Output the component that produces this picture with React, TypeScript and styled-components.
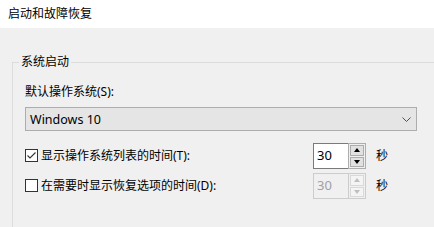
import React from 'react'
import styled, { createGlobalStyle } from 'styled-components'

const GlobalStyle = createGlobalStyle`
    html, body {
        margin: 0;
        padding: 0;
        background: #f0f0f0;
    }
    body {
        font-family: "Noto Sans", "Noto Sans CJK SC", sans-serif;
        font-size: 12px;
        color: #000;
    }
`

export default function App() {
    return (
        <Page>
            <GlobalStyle />

            <Header>启动和故障恢复</Header>

            <Body>
                <Group>
                    <Legend>系统启动</Legend>

                    <FieldLabel>默认操作系统(S):</FieldLabel>

                    <Combo>
                        <span>Windows 10</span>
                        <svg width="9" height="5" viewBox="0 0 9 5">
                            <polyline points="0.5,0.5 4.5,4.5 8.5,0.5" fill="none" stroke="#505050" strokeWidth="1" />
                        </svg>
                    </Combo>

                    <Rows>
                        <TimeRow
                            checked
                            label="显示操作系统列表的时间(T):"
                            value="30"
                        />
                        <TimeRow
                            label="在需要时显示恢复选项的时间(D):"
                            value="30"
                        />
                    </Rows>
                </Group>
            </Body>
        </Page>
    )
}

const TimeRow = (props: RowProps) => (
    <Row>
        <CheckLabel>
            <Box>
                {props.checked && (
                    <svg width="11" height="11" viewBox="0 0 11 11">
                        <polyline points="1.5,5.5 4,8 9.5,2.5" fill="none" stroke="#333" strokeWidth="1.1" />
                    </svg>
                )}
            </Box>
            <span>{props.label}</span>
        </CheckLabel>

        <Spin>
            <SpinField $disabled={!props.checked}>{props.value}</SpinField>
            <SpinButtons $disabled={!props.checked}>
                <SpinButton $disabled={!props.checked}>
                    <Arrow $up $disabled={!props.checked} />
                </SpinButton>
                <SpinButton $disabled={!props.checked}>
                    <Arrow $disabled={!props.checked} />
                </SpinButton>
            </SpinButtons>
        </Spin>

        <Unit>秒</Unit>
    </Row>
)

const Page = styled.div`
    width: 434px;
    height: 227px;
    overflow: hidden;
    display: flex;
    flex-direction: column;
`

const Header = styled.div`
    height: 28px;
    flex-shrink: 0;
    background: #fff;
    padding-left: 8px;
    line-height: 27px;
    font-size: 12px;
`

const Body = styled.div`
    flex: 1;
    background: #f0f0f0;
    padding: 26px 0 0 12px;
    overflow: hidden;
`

const Group = styled.fieldset`
    margin: 0;
    width: 460px;
    height: 200px;
    border: 1px solid #dcdcdc;
    padding: 0 0 0 12px;
    display: flex;
    flex-direction: column;
`

const Legend = styled.legend`
    margin-left: -6px;
    padding: 0 2px;
    line-height: 16px;
    height: 16px;
`

const FieldLabel = styled.div`
    margin-top: 14px;
    line-height: 16px;
`

const Combo = styled.div`
    margin-top: 7px;
    width: 392px;
    height: 24px;
    box-sizing: border-box;
    border: 1px solid #adadad;
    background: #e5e5e5;
    display: flex;
    align-items: center;
    justify-content: space-between;
    padding: 0 5px 0 4px;
    font-size: 12.5px;
`

const Rows = styled.div`
    margin-top: 12px;
    display: flex;
    flex-direction: column;
    gap: 4px;
`

const Row = styled.div`
    display: grid;
    grid-template-columns: 278px 53px auto;
    column-gap: 10px;
    align-items: center;
    height: 26px;
`

const CheckLabel = styled.label`
    display: flex;
    align-items: center;
    gap: 3px;
    margin-top: -2px;
`

const Box = styled.span`
    width: 13px;
    height: 13px;
    box-sizing: border-box;
    border: 1px solid #333;
    background: #fff;
    display: flex;
    align-items: center;
    justify-content: center;
`

const Spin = styled.div`
    display: flex;
    height: 26px;
`

const SpinField = styled.div<{ $disabled?: boolean }>`
    width: 35px;
    box-sizing: border-box;
    border: 1px solid ${p => p.$disabled ? '#cccccc' : '#7a7a7a'};
    border-right: none;
    background: ${p => p.$disabled ? '#f0f0f0' : '#fff'};
    color: ${p => p.$disabled ? '#a0a0a0' : '#000'};
    padding-left: 3px;
    line-height: 23px;
    font-size: 13px;
`

const SpinButtons = styled.div<{ $disabled?: boolean }>`
    width: 18px;
    box-sizing: border-box;
    border: 1px solid ${p => p.$disabled ? '#cccccc' : '#adadad'};
    padding: 1px;
    display: flex;
    flex-direction: column;
    gap: 1px;
    background: #f0f0f0;
`

const SpinButton = styled.div<{ $disabled?: boolean }>`
    flex: 1;
    box-sizing: border-box;
    border: 1px solid ${p => p.$disabled ? '#d9d9d9' : '#adadad'};
    background: ${p => p.$disabled ? '#f4f4f4' : '#e1e1e1'};
    display: flex;
    align-items: center;
    justify-content: center;
`

const Arrow = styled.span<{ $up?: boolean, $disabled?: boolean }>`
    width: 0;
    height: 0;
    border-left: 3.5px solid transparent;
    border-right: 3.5px solid transparent;
    ${p => p.$up
        ? `border-bottom: 4px solid ${p.$disabled ? '#bfbfbf' : '#000'};`
        : `border-top: 4px solid ${p.$disabled ? '#bfbfbf' : '#000'};`}
`

const Unit = styled.span`
    margin-top: -2px;
`

// Types
type RowProps = {
    checked?: boolean,
    label: string,
    value: string,
}
